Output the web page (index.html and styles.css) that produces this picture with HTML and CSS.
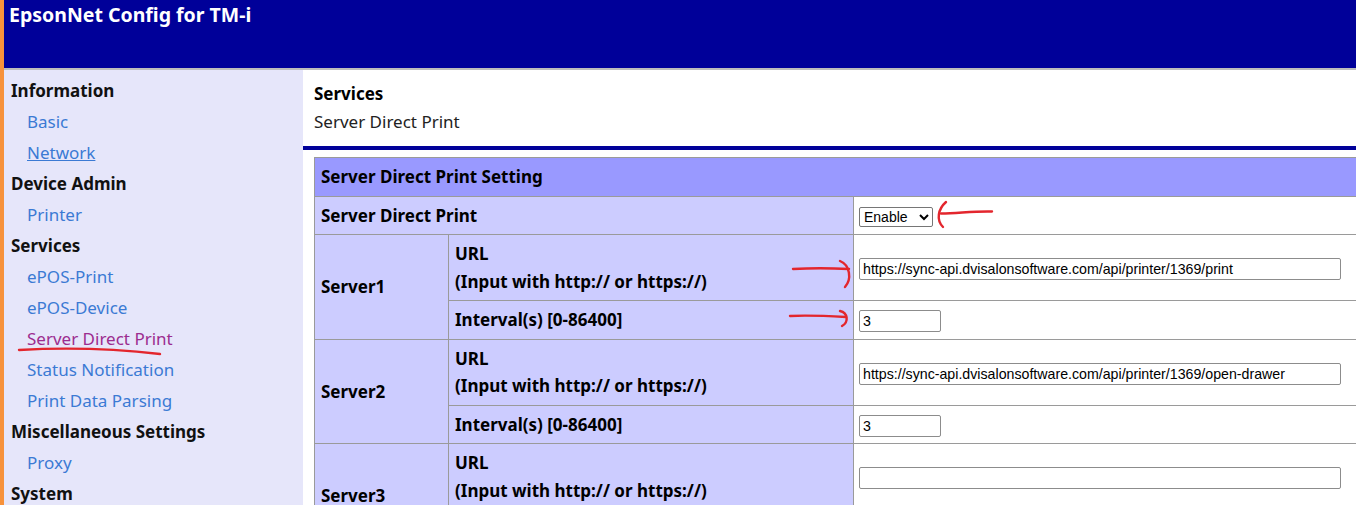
FILE: index.html
```html
<!DOCTYPE html>
<html lang="en">
<head>
<meta charset="utf-8">
<title>EpsonNet Config for TM-i</title>
<link rel="stylesheet" href="styles.css">
</head>
<body>
<div class="page">
  <header class="topbar">
    <h1 class="brand">EpsonNet Config for TM-i</h1>
  </header>
  <div class="layout">
    <nav class="side">
      <div class="grp">Information</div>
      <a class="item" href="#">Basic</a>
      <a class="item hover" href="#">Network</a>
      <div class="grp">Device Admin</div>
      <a class="item" href="#">Printer</a>
      <div class="grp">Services</div>
      <a class="item" href="#">ePOS-Print</a>
      <a class="item" href="#">ePOS-Device</a>
      <a class="item visited" href="#">Server Direct Print</a>
      <a class="item" href="#">Status Notification</a>
      <a class="item" href="#">Print Data Parsing</a>
      <div class="grp">Miscellaneous Settings</div>
      <a class="item" href="#">Proxy</a>
      <div class="grp">System</div>
    </nav>
    <main class="main">
      <div class="crumb">
        <div class="cat">Services</div>
        <div class="sub">Server Direct Print</div>
      </div>
      <div class="rule"></div>
      <table class="grid">
        <colgroup>
          <col class="c1"><col class="c2"><col class="c3">
        </colgroup>
        <tr><th class="head" colspan="3">Server Direct Print Setting</th></tr>
        <tr>
          <th class="lbl" colspan="2">Server Direct Print</th>
          <td class="val"><select class="sel"><option>Enable</option><option>Disable</option></select></td>
        </tr>
        <tr>
          <th class="lbl" rowspan="2">Server1</th>
          <th class="lbl">URL<br>(Input with http:// or https://)</th>
          <td class="val"><input class="url" type="text" value="https://sync-api.dvisalonsoftware.com/api/printer/1369/print"></td>
        </tr>
        <tr>
          <th class="lbl">Interval(s) [0-86400]</th>
          <td class="val"><input class="num" type="text" value="3"></td>
        </tr>
        <tr>
          <th class="lbl" rowspan="2">Server2</th>
          <th class="lbl">URL<br>(Input with http:// or https://)</th>
          <td class="val"><input class="url" type="text" value="https://sync-api.dvisalonsoftware.com/api/printer/1369/open-drawer"></td>
        </tr>
        <tr>
          <th class="lbl">Interval(s) [0-86400]</th>
          <td class="val"><input class="num" type="text" value="3"></td>
        </tr>
        <tr>
          <th class="lbl" rowspan="2">Server3</th>
          <th class="lbl">URL<br>(Input with http:// or https://)</th>
          <td class="val"><input class="url" type="text" value=""></td>
        </tr>
        <tr class="below">
          <th class="lbl"></th>
          <td class="val"></td>
        </tr>
      </table>
    </main>
  </div>
  <svg class="marks" width="1356" height="505" viewBox="0 0 1356 505" aria-hidden="true">
    <g fill="none" stroke="#e3262d" stroke-width="2.4" stroke-linecap="round" stroke-linejoin="round">
      <path d="M19 350 Q 90 346 160 354"/>
      <path d="M992 211.5 C 975 211, 960 213, 941 213.5"/>
      <path d="M946 202 C 938 209, 936 220, 943 227"/>
      <path d="M793 269 C 810 268, 830 268, 849 269"/>
      <path d="M840 261 C 850 265, 852 279, 845 287"/>
      <path d="M790 316 C 808 315, 828 316, 846 317"/>
      <path d="M840 311 C 848 313, 849 322, 842 326"/>
    </g>
  </svg>
</div>
</body>
</html>
```
FILE: styles.css
```css
* { box-sizing: border-box; }

html, body {
  margin: 0;
  padding: 0;
  height: 100%;
  overflow: hidden;
  background: #ffffff;
}

body {
  font-family: "Noto Sans", "Noto Sans CJK JP", sans-serif;
  font-size: 17px;
  color: #000;
}

.page {
  position: relative;
  min-height: 100vh;
  border-left: 4px solid #f7923b;
}

.topbar {
  height: 70px;
  background: #000099;
  border-bottom: 2px solid #bcbcbc;
  padding: 1px 0 0 5px;
}

.brand {
  margin: 0;
  font-size: 19.5px;
  line-height: 27px;
  font-weight: bold;
  color: #ffffff;
}

.layout {
  display: flex;
  align-items: stretch;
  min-height: calc(100vh - 70px);
}

.side {
  flex: 0 0 299px;
  background: #e6e6fa;
  padding-top: 5px;
  display: flex;
  flex-direction: column;
}

.grp {
  padding-left: 7px;
  line-height: 31px;
  font-weight: bold;
  color: #111;
}

.item {
  padding-left: 23px;
  line-height: 31px;
  color: #3b7ad4;
  text-decoration: none;
  align-self: flex-start;
}

.item.hover { text-decoration: underline; }
.item.visited { color: #9c2c8f; }

.main {
  flex: 1 1 auto;
  min-width: 0;
  overflow: hidden;
  padding-top: 10px;
}

.crumb {
  padding-left: 11px;
  line-height: 28px;
}

.cat { font-weight: bold; }
.sub { color: #222; }

.rule {
  margin-top: 10px;
  height: 4px;
  background: #000099;
}

.grid {
  margin: 7px 0 0 11px;
  width: 1062px;
  border-collapse: collapse;
  table-layout: fixed;
}

.c1 { width: 134px; }
.c2 { width: 405px; }

.grid th, .grid td {
  border: 1px solid #9a9a9a;
  padding: 5px 6px;
  line-height: 27.5px;
  text-align: left;
  vertical-align: middle;
}

.grid th { font-weight: bold; }

.head { background: #9999ff; }
.lbl { background: #ccccff; }

.grid .below th, .grid .below td { height: 39px; }

.grid td.val {
  background: #ffffff;
  padding-left: 5px;
}

.sel {
  font-family: "Liberation Sans", Arial, sans-serif;
  font-size: 14px;
  height: 20px;
  width: 74px;
  vertical-align: middle;
  border: 1px solid #767676;
  border-radius: 2px;
  background: #fff;
  color: #000;
}

.url, .num {
  font-family: "Liberation Sans", Arial, sans-serif;
  font-size: 14.2px;
  height: 22px;
  padding: 1px 3px;
  border: 1px solid #8c8c8c;
  border-radius: 2px;
  color: #000;
  background: #fff;
  vertical-align: middle;
}

.url { width: 482px; }
.num { width: 82px; }

.marks {
  position: absolute;
  top: 0;
  left: -4px;
  pointer-events: none;
}
```
